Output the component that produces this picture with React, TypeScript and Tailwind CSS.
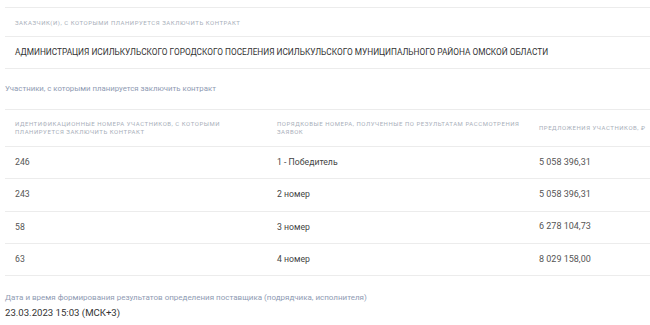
import React from "react";

const rows = [
  ["246", "1 - Победитель", "5 058 396,31"],
  ["243", "2 номер", "5 058 396,31"],
  ["58", "3 номер", "6 278 104,73"],
  ["63", "4 номер", "8 029 158,00"],
];

export default function App() {
  return (
    <div
      className="w-[650px] h-[325px] overflow-hidden bg-white pl-[5px] pt-[7px]"
      style={{ fontFamily: "Roboto, 'Liberation Sans', sans-serif" }}
    >
      <div className="w-[800px]">
        <div className="border-t border-[#ececec] h-[29px] flex items-center pl-[10px] text-[6px] tracking-[0.09em] uppercase text-[#a9afba]">
          Заказчик(и), с которыми планируется заключить контракт
        </div>
        <div className="border-t border-[#ececec] h-[32px] flex items-center pl-[10px] text-[8.3px] text-[#333]">
          АДМИНИСТРАЦИЯ ИСИЛЬКУЛЬСКОГО ГОРОДСКОГО ПОСЕЛЕНИЯ ИСИЛЬКУЛЬСКОГО МУНИЦИПАЛЬНОГО РАЙОНА ОМСКОЙ ОБЛАСТИ
        </div>
        <div className="border-t border-[#ececec] h-[41px] flex items-center text-[7.8px] text-[#8f9bb3]">
          Участники, с которыми планируется заключить контракт
        </div>
        <div className="w-[786px]">
          <div className="grid grid-cols-3 border-t border-[#ececec] h-[37px] items-center text-[6px] tracking-[0.09em] uppercase text-[#a9afba] leading-[8px]">
            <div className="pl-[10px] pr-[16px]">Идентификационные номера участников, с которыми планируется заключить контракт</div>
            <div className="pl-[10px] pr-[4px]">Порядковые номера, полученные по результатам рассмотрения заявок</div>
            <div className="pl-[10px] pr-[4px]">Предложения участников, ₽</div>
          </div>
          {rows.map((r, i) => (
            <div
              key={i}
              className="grid grid-cols-3 border-t border-[#ececec] h-[32.3px] items-center text-[8.7px] text-[#555]"
            >
              <div className="px-[10px]">{r[0]}</div>
              <div className="px-[10px] text-[#444]">{r[1]}</div>
              <div className="px-[10px] text-[9px]">{r[2]}</div>
            </div>
          ))}
          <div className="border-t border-[#ececec]" />
        </div>
        <div className="pt-[16px] text-[8px] text-[#8f9bb3] leading-[12px]">
          Дата и время формирования результатов определения поставщика (подрядчика, исполнителя)
        </div>
        <div className="pt-[2px] text-[9.6px] text-[#333] leading-[14px]">23.03.2023 15:03 (МСК+3)</div>
      </div>
    </div>
  );
}
